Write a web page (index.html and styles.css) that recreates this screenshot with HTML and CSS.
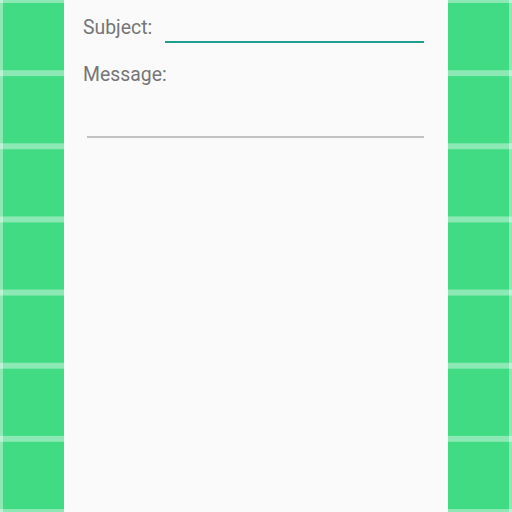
FILE: index.html
```html
<!DOCTYPE html>
<html>
<head>
<meta charset="utf-8">
<link rel="stylesheet" href="styles.css">
</head>
<body>
<div class="panel">
  <div class="subject-row">
    <span class="label">Subject:</span>
    <div class="subject-input"></div>
  </div>
  <div class="label message-label">Message:</div>
  <div class="message-input"></div>
</div>
</body>
</html>
```
FILE: styles.css
```css
html, body {
  margin: 0;
  padding: 0;
  width: 512px;
  height: 512px;
  overflow: hidden;
}
body {
  background-color: #40db83;
  background-image:
    linear-gradient(to bottom, rgba(255,255,255,0.4) 3px, transparent 3px, transparent calc(100% - 3px), rgba(255,255,255,0.4) calc(100% - 3px)),
    linear-gradient(to right, rgba(255,255,255,0.4) 3px, transparent 3px, transparent calc(100% - 3px), rgba(255,255,255,0.4) calc(100% - 3px));
  background-size: 73.142857px 73.142857px;
  font-family: Roboto, "Noto Sans", sans-serif;
}
.panel {
  box-sizing: border-box;
  margin-left: 64px;
  width: 384px;
  height: 512px;
  background: #fafafa;
  padding: 0 24px 0 19px;
}
.subject-row {
  display: flex;
  align-items: flex-end;
  height: 43px;
}
.label {
  font-size: 19.4px;
  line-height: 24px;
  color: #767676;
}
.subject-row .label {
  margin-bottom: 3px;
}
.subject-input {
  flex: 1;
  margin-left: 13px;
  height: 0;
  border-bottom: 2.5px solid #1f9e92;
}
.message-label {
  margin-top: 20px;
}
.message-input {
  margin-left: 4px;
  height: 49px;
  border-bottom: 2px solid #c2c2c2;
}
```
